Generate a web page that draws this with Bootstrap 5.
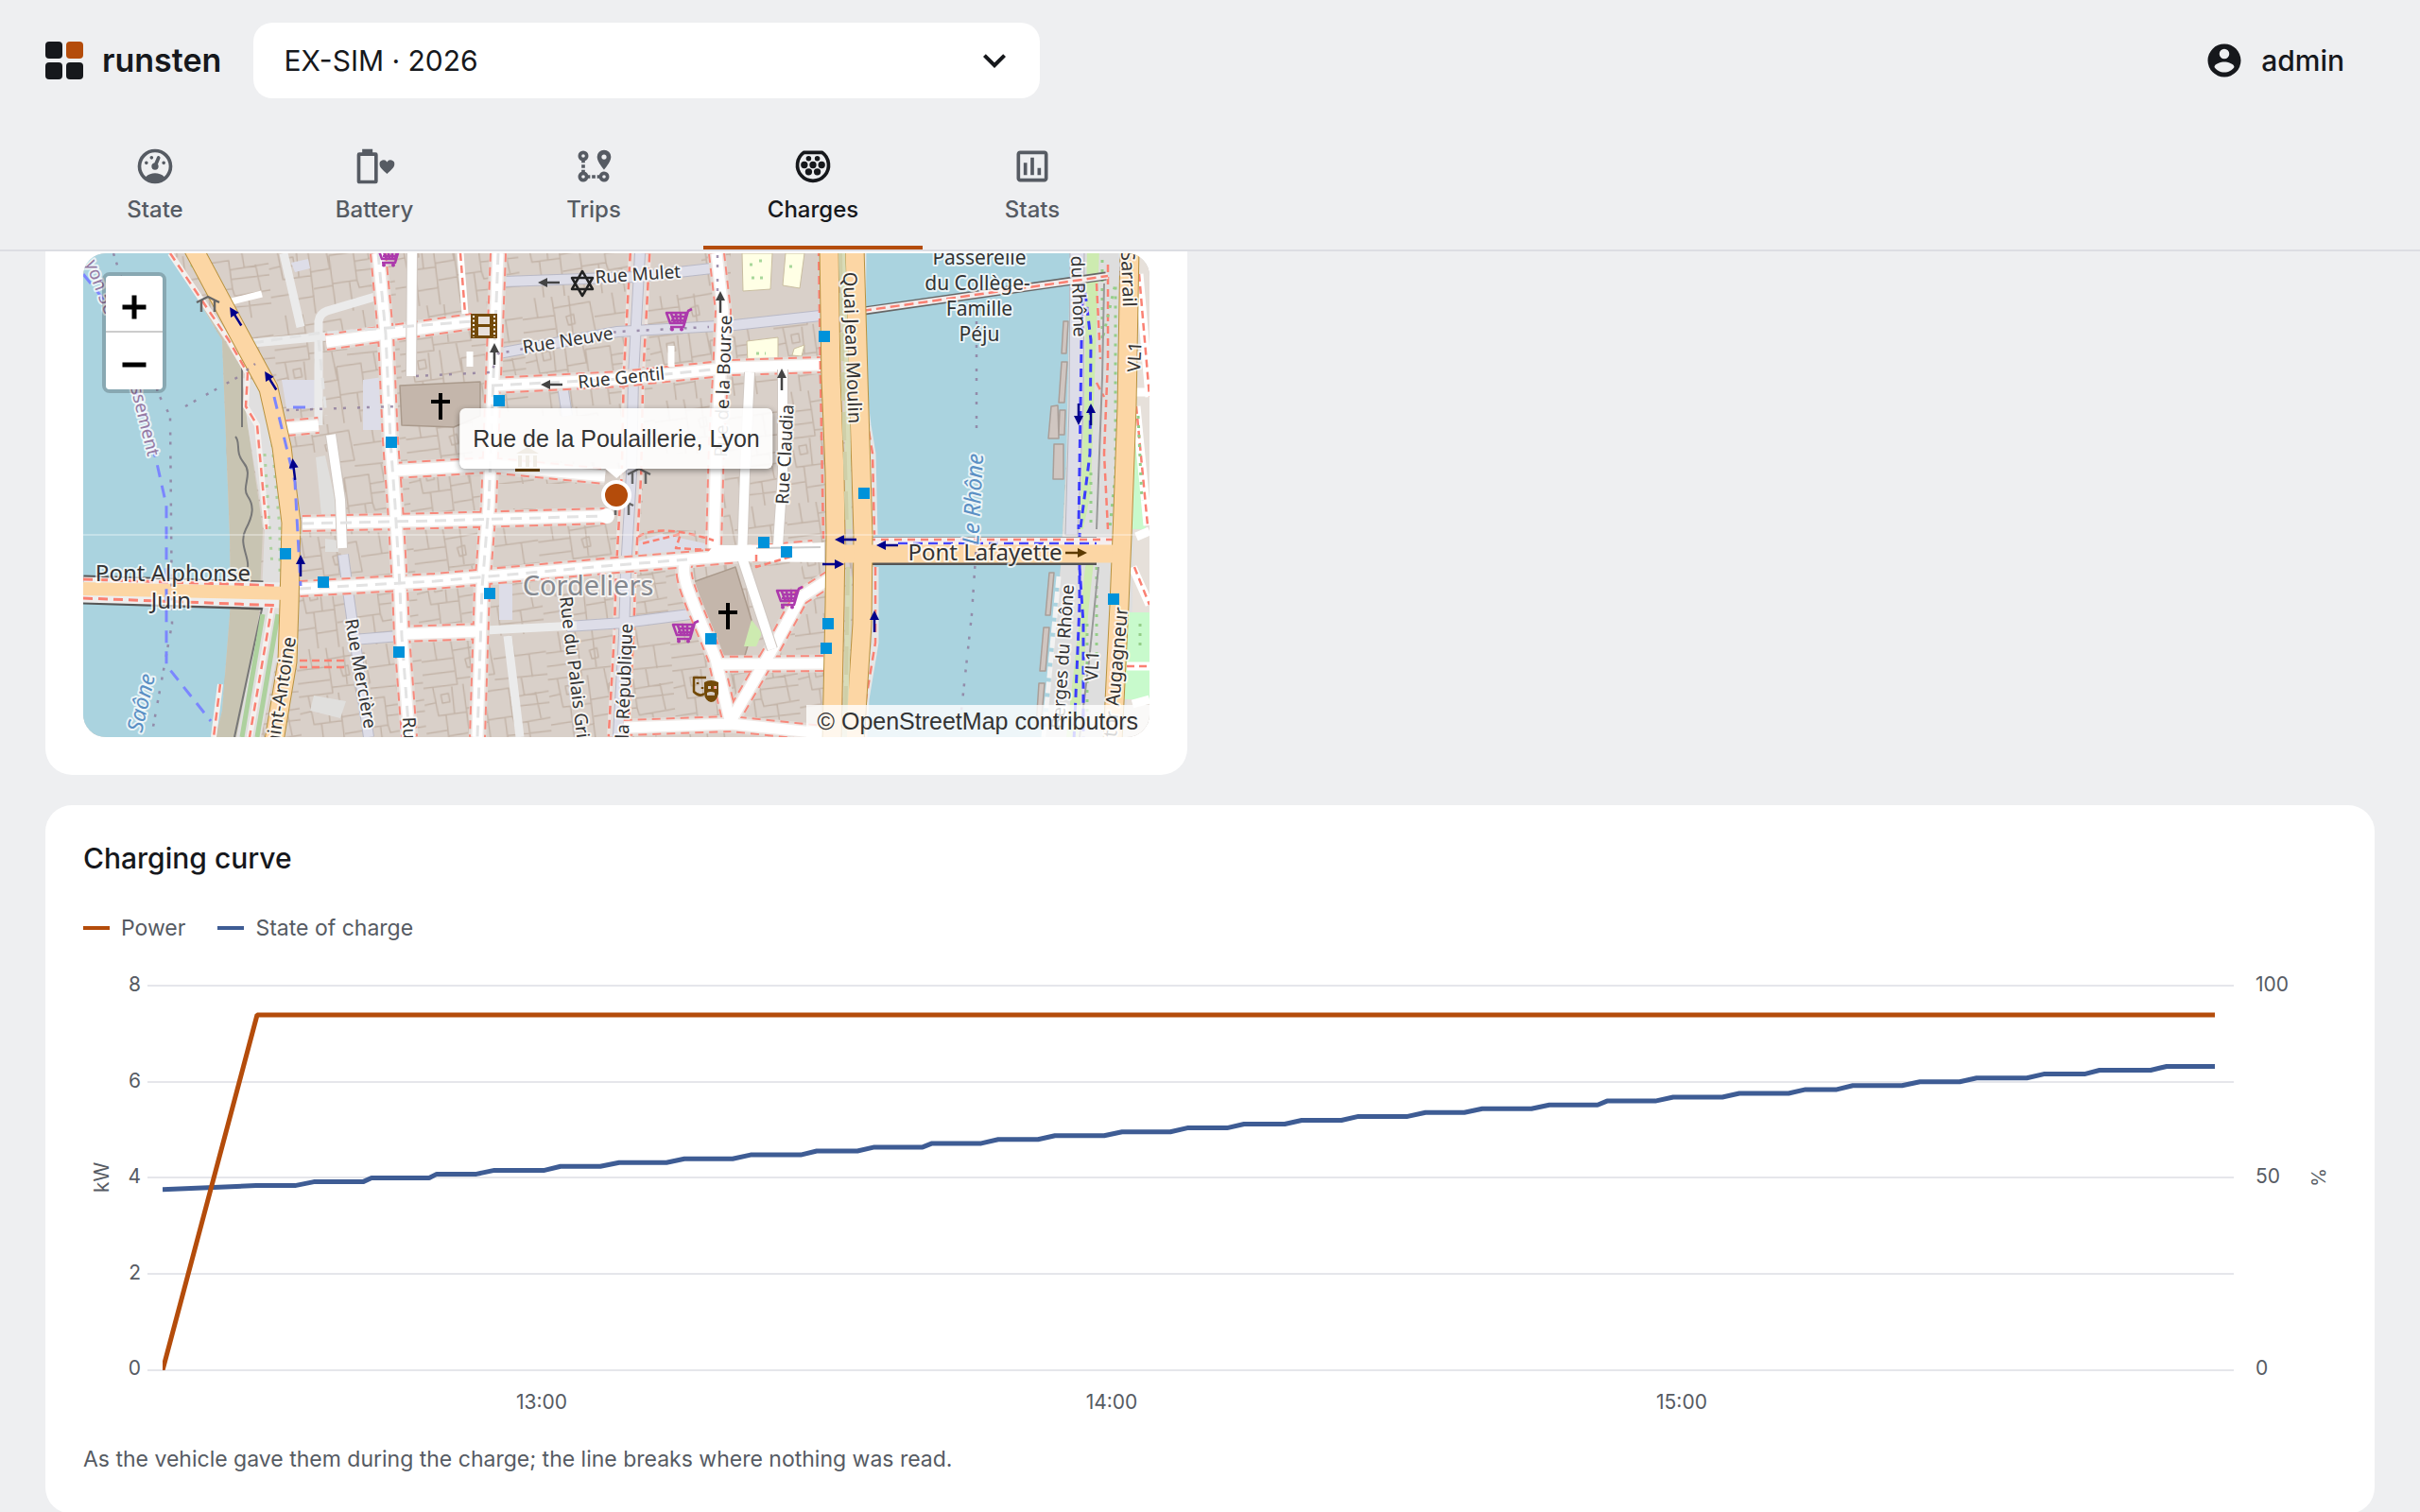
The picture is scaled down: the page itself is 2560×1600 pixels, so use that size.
<!doctype html>
<html lang="en">
<head>
<meta charset="utf-8">
<meta name="viewport" content="width=device-width, initial-scale=1">
<title>runsten · Charges</title>
<link href="https://cdn.jsdelivr.net/npm/bootstrap@5.3.0/dist/css/bootstrap.min.css" rel="stylesheet">
<script src="https://cdn.jsdelivr.net/npm/bootstrap@5.3.0/dist/js/bootstrap.bundle.min.js"></script>
<style>
:root{--ink:#16181c;--soft:#565b63;--accent:#b44c0b;--blue:#3e5c94;--page:#eeeff1;--line:#dcdde3}
body{background:var(--page);color:var(--ink);font-family:Inter,sans-serif;font-size:30px;line-height:40px}
.topbar{background:var(--page);border-bottom:2px solid var(--line);z-index:20}
.brand-row{padding:24px 80px 24px 48px}
.brand{font-size:34px;font-weight:600;color:var(--ink);text-decoration:none;gap:20px;padding-right:34px}
.vehicle{width:832px;height:80px;border:0;border-radius:20px;padding:0 80px 0 32px;font-size:30px;line-height:40px;color:var(--ink);background-color:#fff;
background-image:url("data:image/svg+xml,%3Csvg xmlns='http://www.w3.org/2000/svg' viewBox='0 0 24 24'%3E%3Cpath fill='%2316181c' d='M7.41 8.58 12 13.17l4.59-4.59L18 10l-6 6-6-6z'/%3E%3C/svg%3E");background-size:48px;background-position:right 24px center}
.account{background:none;border:0;padding:0;gap:18px;font-weight:500;color:var(--ink)}
.tabs{padding:0 48px}
.tab-link{width:232px;height:136px;padding-top:26px;gap:6px;border-bottom:4px solid transparent;color:var(--soft);font-size:24px;line-height:36px;font-weight:500;text-decoration:none}
.tab-link svg{width:44px;height:44px}
.tab-link.active{color:var(--ink);border-color:var(--accent)}
.content{padding:0 48px}
.panel{background:#fff;border-radius:28px;padding:36px 40px 40px}
.panel-map{width:1208px;padding-top:2px;border-top-left-radius:0;border-top-right-radius:0}
.map{height:512px;border-radius:24px;overflow:hidden;font-family:"Liberation Sans",sans-serif;color:#333}
.zoomer{left:20px;top:20px;border:4px solid rgba(0,0,0,.2);border-radius:8px;background-clip:padding-box}
.zoomer button{width:60px;height:60px;border:0;background:#fff;padding:8px 0 0}
.zoomer button:first-child{border-bottom:2px solid #ccc;border-radius:4px 4px 0 0}
.zoomer button:last-child{border-radius:0 0 4px 4px}
.place-tip{left:564px;top:164px;transform:translateX(-50%);height:64px;padding:0 14px;border-radius:6px;background:rgba(255,255,255,.9);box-shadow:0 2px 6px rgba(0,0,0,.4);font-size:25px;line-height:64px;white-space:nowrap}
.place-tip::after{content:"";position:absolute;left:50%;top:100%;margin-left:-12px;border:12px solid transparent;border-bottom:0;border-top:10px solid #fff}
.credit{right:0;bottom:0;background:rgba(255,255,255,.8);padding:0 12px;font-size:25px;line-height:34px}
.panel h2{font-size:30px;line-height:40px;font-weight:500;margin:0 0 36px}
.key{gap:34px;font-size:23px;line-height:36px;color:var(--soft);margin-bottom:14px}
.key span{gap:12px}
.key i{width:28px;height:4px}
.note{font-size:23px;line-height:36px;color:var(--soft);margin:20px 0 0}
.axis{font-size:21px;fill:var(--soft)}
.curve-chart{width:100%;height:auto}
.lbl{font-family:"Noto Sans",sans-serif;fill:#333;paint-order:stroke;stroke:rgba(255,255,255,.75);stroke-width:4px;stroke-linejoin:round;font-size:19px}
</style>
</head>
<body>
<header class="topbar sticky-top">
 <div class="brand-row d-flex align-items-center">
  <a href="#" class="brand d-flex align-items-center">
   <svg width="40" height="40" viewBox="0 0 40 40"><g fill="#16181c"><rect width="18" height="18" rx="4"/><rect y="22" width="18" height="18" rx="4"/><rect x="22" y="22" width="18" height="18" rx="4"/></g><rect x="22" width="18" height="18" rx="4" fill="#b44c0b"/></svg>
   runsten</a>
  <select class="form-select vehicle" aria-label="Vehicle"><option>EX-SIM · 2026</option></select>
  <button class="account d-flex align-items-center ms-auto"><svg width="42" height="42" viewBox="0 0 24 24" fill="currentColor"><path d="M12,19.2C9.5,19.2 7.29,17.92 6,16C6.03,14 10,12.9 12,12.9C14,12.9 17.97,14 18,16C16.71,17.92 14.5,19.2 12,19.2M12,5A3,3 0 0,1 15,8A3,3 0 0,1 12,11A3,3 0 0,1 9,8A3,3 0 0,1 12,5M12,2A10,10 0 0,0 2,12A10,10 0 0,0 12,22A10,10 0 0,0 22,12C22,6.47 17.5,2 12,2Z"/></svg>admin</button>
 </div>
 <nav class="tabs d-flex">
  <a href="#" class="tab-link d-flex flex-column align-items-center"><svg viewBox="0 0 24 24" fill="currentColor"><path d="M17.3,18C19,16.5 20,14.4 20,12A8,8 0 0,0 12,4A8,8 0 0,0 4,12C4,14.4 5,16.5 6.7,18C8.2,16.7 10,16 12,16C14,16 15.9,16.7 17.3,18M12,2A10,10 0 0,1 22,12A10,10 0 0,1 12,22A10,10 0 0,1 2,12A10,10 0 0,1 12,2M7,9A1,1 0 0,1 8,10A1,1 0 0,1 7,11A1,1 0 0,1 6,10A1,1 0 0,1 7,9M10,6A1,1 0 0,1 11,7A1,1 0 0,1 10,8A1,1 0 0,1 9,7A1,1 0 0,1 10,6M17,9A1,1 0 0,1 18,10A1,1 0 0,1 17,11A1,1 0 0,1 16,10A1,1 0 0,1 17,9M14.4,6.1C14.9,6.3 15.1,6.9 15,7.4L13.6,10.8C13.8,11.1 14,11.5 14,12A2,2 0 0,1 12,14A2,2 0 0,1 10,12C10,11 10.7,10.1 11.7,10L13.1,6.7C13.3,6.1 13.9,5.9 14.4,6.1Z"/></svg>State</a>
  <a href="#" class="tab-link d-flex flex-column align-items-center"><svg viewBox="0 0 24 24" fill="currentColor"><path d="M12,20H4V6H12M12.67,4H11V2H5V4H3.33A1.33,1.33 0 0,0 2,5.33V20.67C2,21.4 2.6,22 3.33,22H12.67A1.33,1.33 0 0,0 14,20.67V5.33A1.33,1.33 0 0,0 12.67,4"/><path d="M19.3,16.4L18.6,15.7C16.4,13.7 15,12.4 15,10.8A2.3,2.3 0 0 1 19.3,9.5A2.3,2.3 0 0 1 23.6,10.8C23.6,12.4 22.2,13.7 20,15.7Z"/></svg>Battery</a>
  <a href="#" class="tab-link d-flex flex-column align-items-center"><svg viewBox="0 0 24 24" fill="currentColor"><path d="M18,15A3,3 0 0,1 21,18A3,3 0 0,1 18,21C16.69,21 15.58,20.17 15.17,19H14V17H15.17C15.58,15.83 16.69,15 18,15M18,17A1,1 0 0,0 17,18A1,1 0 0,0 18,19A1,1 0 0,0 19,18A1,1 0 0,0 18,17M18,8A1.43,1.43 0 0,0 19.43,6.57C19.43,5.78 18.79,5.14 18,5.14C17.21,5.14 16.57,5.78 16.57,6.57A1.43,1.43 0 0,0 18,8M18,2.57A4,4 0 0,1 22,6.57C22,9.56 18,14 18,14C18,14 14,9.56 14,6.57A4,4 0 0,1 18,2.57M8.83,17H10V19H8.83C8.42,20.17 7.31,21 6,21A3,3 0 0,1 3,18C3,16.69 3.83,15.58 5,15.17V14H7V15.17C7.85,15.47 8.53,16.15 8.83,17M6,17A1,1 0 0,0 5,18A1,1 0 0,0 6,19A1,1 0 0,0 7,18A1,1 0 0,0 6,17M6,3A3,3 0 0,1 9,6C9,7.31 8.17,8.42 7,8.83V10H5V8.83C3.83,8.42 3,7.31 3,6A3,3 0 0,1 6,3M6,5A1,1 0 0,0 5,6A1,1 0 0,0 6,7A1,1 0 0,0 7,6A1,1 0 0,0 6,5M11,19V17H13V19H11M7,13H5V11H7V13Z"/></svg>Trips</a>
  <a href="#" class="tab-link active d-flex flex-column align-items-center" aria-current="page"><svg viewBox="0 0 24 24" fill="currentColor"><path d="M6.8 4H17.2A9 9 0 1 1 6.8 4Z" fill="none" stroke="currentColor" stroke-width="2" stroke-linejoin="round"/><circle cx="9.5" cy="7.5" r="1.5"/><circle cx="14.5" cy="7.5" r="1.5"/><circle cx="7" cy="11.2" r="2"/><circle cx="12" cy="11.2" r="2"/><circle cx="17" cy="11.2" r="2"/><circle cx="9.5" cy="15.2" r="2"/><circle cx="14.5" cy="15.2" r="2"/></svg>Charges</a>
  <a href="#" class="tab-link d-flex flex-column align-items-center"><svg viewBox="0 0 24 24" fill="currentColor"><path d="M9,17H7V10H9V17M13,17H11V7H13V17M17,17H15V13H17V17M19,19H5V5H19V19.1M19,3H5C3.9,3 3,3.9 3,5V19C3,20.1 3.9,21 5,21H19C20.1,21 21,20.1 21,19V5C21,3.9 20.1,3 19,3Z"/></svg>Stats</a>
 </nav>
</header>

<main class="content d-flex flex-column gap-4">
<section class="panel panel-map" aria-label="Location">
<div class="map position-relative">
<svg class="d-block w-100 h-100" viewBox="88 268 1128 512" preserveAspectRatio="xMidYMid slice" stroke-linejoin="round" aria-label="Map of Lyon">
<defs>
<pattern id="plots" width="132" height="118" patternUnits="userSpaceOnUse" patternTransform="rotate(-4)"><path d="M0 22L34 20 36 48 0 50M14 0L16 21M34 20L32 0M34 12L72 8 76 40 36 42M50 0L52 40M76 24L132 20M96 0L98 22M114 22L116 46M76 46L132 44M10 50L14 80 44 78 42 48M30 50L31 79M60 42L64 72 44 74M64 58L90 56 92 86 66 88 64 58M90 66L132 62M104 45L106 64M118 62L122 90M92 76L132 74M0 68L12 66M22 80L24 118M0 98L22 96M44 78L46 118M24 102L46 100M66 88L68 118M46 92L66 90M84 87L86 118M92 86L94 94 132 90M108 92L110 118M86 106L132 104M0 36L34 34M46 22L54 20 55 30 48 31ZM18 58L26 57 27 66 19 67Z" fill="none" stroke="#c3b4a8" stroke-width="1.5"/></pattern>
<g id="cart" fill="none" stroke="#ac39ac" stroke-width="2.6"><path d="M-13-7H8L5 4H-9ZM14-11L10-9 5 8H-9M-8-3H8M-8 1H7M-8-6L-4 4M-3-6L-1 4M2-6L2 4"/><path d="M-7 10.500v.1M3 10.500v.1" stroke-width="4" stroke-linecap="round"/></g>
<g id="arw"><path d="M0 10V-6" stroke="currentColor" stroke-width="2.500"/><path d="M0-13L5-3H-5Z" fill="currentColor"/></g>
<g id="shelter" fill="none" stroke="#666" stroke-width="2.500"><path d="M-12 -2L0-8 12-2M-7-4V8M7-4V8"/></g>
<path id="roads1" fill="none" d="M400 268L408 353L413 466L418 535L423 621L425 673L433 780M527 268L522 398L517 535L510 622L505 780M758 268L765 329L762 398L758 467L755 580M317 623L460 615L640 599L727 592L860 580M520 408L657 401L773 389L868 386M320 554L460 551L640 546M727 592C715 605 735 640 757 697L773 766M773 763L817 687L847 632L878 612M303 453L337 450M423 671L510 668M757 703L872 702M660 770L773 766L870 776M417 498L517 492L640 504M345 362L500 340"/>
<path id="lanes" fill="none" d="M793 394L788 501L785 590L817 687M350 460L360 529L362 580M436 268L435 398M828 391L828 501L823 577"/>
<path id="quays" fill="none" d="M204 262L252 352L284 411L298 473L308 553L306 640L304 700L290 784M877 262L879 400L883 500L884 567L883 640L880 784M904 262L908 400L911 500L913 567L912 660L904 784M1195 262L1192 430L1187 567L1184 640L1177 784"/>
</defs>
<rect x="88" y="268" width="1128" height="512" fill="#d9d0c9"/>
<rect x="88" y="268" width="1128" height="512" fill="url(#plots)"/>
<!-- courtyards without inner plots -->
<path d="M525 512H640V538H522ZM680 480H752V562L680 560ZM773 268H868V330L773 340ZM308 480L350 478 356 548H314ZM500 440H660V490L500 486ZM795 600L850 596 812 670ZM742 310L690 314V268H742Z" fill="#d9d0c9"/>
<path d="M334 484L344 482 358 545 340 545ZM344 570L358 572V584H344ZM332 736L366 742 360 760 328 752Z" fill="#e0dfdd"/>
<!-- Saône and its bank -->
<path d="M88 268H180L235 360 243 566 244 639 235 752 228 780H88Z" fill="#aad3df"/>
<path d="M200 300L235 360 243 566 244 639 235 752 228 780H252L274 650 278 560 262 450 256 390Z" fill="#c8c4b2"/>
<path d="M256 400L284 404 304 520V642L276 780H250L276 650 280 560 262 450Z" fill="#e0dfdf"/>
<path d="M256 385V452M249 462C255 468 248 478 258 490S255 515 262 525 268 545 260 560 264 590 262 600M278 640L248 780" fill="none" stroke="#777" stroke-width="2"/>
<path d="M278 650L256 780M294 650L272 780" stroke="#add19e" stroke-width="5" fill="none"/>
<path d="M288 640L264 780M180 268L242 360 262 395 260 430 272 450 282 560M233 724L226 780" stroke="#f4f0ee" stroke-width="6" fill="none"/>
<path d="M288 640L264 780M180 268L242 360 262 395 260 430 272 450 282 560M233 724L226 780" stroke="#fa8072" stroke-width="2.500" stroke-dasharray="9 6" fill="none"/>
<path d="M288 470L296 560V610M280 480L288 600M202 280L230 310 256 370" stroke="#add19e" stroke-width="3" stroke-dasharray="3 8" fill="none"/>
<!-- squares, churches, schools -->
<path d="M298 402H335V432H303ZM384 402L412 398V455H384ZM528 618H542V656H528ZM675 573L700 565 750 576 740 586 676 588ZM308 278L326 274 328 284 312 288Z" fill="#dddde8"/>
<path d="M423 408L508 404V440L480 452 425 450ZM733 616L778 600 797 663 787 697 760 696Z" fill="#c4b6ab" stroke="#aa9a8c" stroke-width="1.500"/>
<path d="M795 656L806 670 800 684 787 684Z" fill="#cdebb0"/>
<path d="M785 268H817L815 306 786 308ZM831 268H851L846 305 828 302ZM790 361L823 357V383L791 384ZM840 369L851 365 848 377 838 376Z" fill="#ffffe5" stroke="#c9bda0"/>
<path d="M793 280h6M803 276h6M795 294h12M835 282h8M800 374h10" stroke="#a8d79a" stroke-width="3" stroke-dasharray="3 6"/>
<!-- pedestrian streets -->
<g fill="none"><path d="M677 268L670 398L668 501L662 604L660 673L654 780" stroke="#ece4e0" stroke-width="24"/><path d="M677 268L670 398L668 501L662 604L660 673L654 780" stroke="#fa8072" stroke-width="23" stroke-dasharray="9 6"/><path d="M677 268L670 398L668 501L662 604L660 673L654 780" stroke="#e3dcda" stroke-width="18"/>
<path d="M677 268L670 398L668 501L662 604L660 673L654 780M533 298L673 293L753 284M527 374L653 351L777 344L868 334M363 587L370 639L390 780M373 677L423 673M600 663L660 659L730 650M595 408L600 440" stroke="#b9b9c6" stroke-width="12"/><path d="M677 268L670 398L668 501L662 604L660 673L654 780M533 298L673 293L753 284M527 374L653 351L777 344L868 334M363 587L370 639L390 780M373 677L423 673M600 663L660 659L730 650M595 408L600 440" stroke="#dddde8" stroke-width="10"/><path d="M513 667L610 662M537 673L550 780M300 268L318 346M267 363L345 356M337 450L337 340Q338 332 346 329L400 313" stroke="#ebebeb" stroke-width="9"/></g>
<!-- streets -->
<use href="#roads1" stroke="#e2dad5" stroke-width="19"/>
<use href="#roads1" stroke="#fa8072" stroke-opacity=".9" stroke-width="18" stroke-dasharray="9 6"/>
<use href="#roads1" stroke="#efe9e6" stroke-width="14"/>
<use href="#roads1" stroke="#fff" stroke-width="11"/>
<use href="#lanes" stroke="#d0c8c2" stroke-width="12"/><use href="#lanes" stroke="#fff" stroke-width="10"/>
<path d="M755 577L830 576 872 574V595L780 594 740 596Z" fill="#fff"/>
<path d="M800 580L868 579" stroke="#ccc" stroke-width="2"/>
<path d="M400 268L408 353L413 466L418 535L423 621L425 673L433 780M527 268L522 398L517 535L510 622L505 780M317 623L460 615L640 599L727 592M320 554L460 551L640 546M520 408L657 401L773 389M267 363L333 353L500 340M337 360L345 440" fill="none" stroke="#e3e3e3" stroke-width="3" stroke-dasharray="12 8"/>
<path d="M245 319L277 311M487 268L492 332M497 388V372M710 388V366" fill="none" stroke="#fff" stroke-width="7"/>
<path d="M317 699H368M317 706H368M487 268L492 332" stroke="#fa8072" stroke-width="2.500" stroke-dasharray="8 5" fill="none"/>
<circle cx="642" cy="546" r="8" fill="#fff"/>
<path d="M675 568C690 558 720 560 755 572M680 575L720 565 715 580 750 582M800 587V600L840 588" fill="none" stroke="#fa8072" stroke-width="2.500" stroke-dasharray="7 4"/>
<!-- Rhône and east bank -->
<path d="M916 262L914 330 918 450 926 480 925 570 928 690 918 740 915 784H1110L1122 600 1130 450 1135 262Z" fill="#aad3df"/>
<path d="M1132 262H1216V784H1106L1122 600 1128 500Z" fill="#dedede"/>
<path d="M1132 262H1147L1146 430 1140 566H1127L1131 430Z" fill="#dddde8" stroke="#b5b5bd"/>
<path d="M1150 262H1163L1158 400 1154 520 1146 560H1142L1147 430ZM1148 600L1159 576 1152 640 1147 700 1140 780H1128Z" fill="#cdebb0"/>
<path d="M1204 262H1216V784H1190L1198 640Z" fill="#e6e0da"/>
<path d="M1202 430L1208 500 1212 560H1198ZM1193 648H1216V740H1187Z" fill="#c8facc"/>
<path d="M1192 705H1216M1205 290L1216 420M1202 430L1214 556M1198 600L1216 640M1200 415H1216M1202 568L1216 562M1198 745L1216 740" fill="none" stroke="#fff" stroke-width="9"/>
<path d="M1192 705H1216M1205 290L1216 420M1202 430L1214 556M1172 280V380L1168 480 1172 560M1160 300L1164 380M1160 405L1168 420M1200 600L1216 640" fill="none" stroke="#fa8072" stroke-width="2.500" stroke-dasharray="8 5"/>
<path d="M1166 275V360L1180 300V500L1174 560M1154 500V560M1150 660V770M1160 600V700M1204 440L1208 530M1206 660V690" fill="none" stroke="#94ce88" stroke-width="3" stroke-dasharray="3 7"/>
<path d="M1168 300L1166 400 1160 560M1162 600L1152 700 1142 780" fill="none" stroke="#999" stroke-width="2"/>
<g fill="#d0c6c1" stroke="#a99e98" stroke-width="1.500"><path d="M1125 340h5l-2 34h-5ZM1123 383h6l-3 43h-6ZM1112 430l7-1 1 35h-11ZM1121 434h6l-1 26h-6ZM1115 470h10v37h-11ZM1110 606h5l-4 45h-5ZM1104 664h6l-4 46h-6ZM1099 723h6l-4 46h-5Z"/></g>
<path d="M1120 610L1104 780" stroke="#f2f2f2" stroke-width="5" stroke-dasharray="12 4"/>
<path d="M1148 310L1154 360 1153 480 1148 520 1142 566 1142 640 1136 784M1145 300L1141 560M1142 600L1146 660 1146 784" fill="none" stroke="#3c3cff" stroke-width="3" stroke-dasharray="9 6"/>
<!-- passerelle -->
<path d="M914 329L1170 292" stroke="#666" stroke-width="9"/><path d="M912 329L1172 292" stroke="#f3eeee" stroke-width="6"/><path d="M912 329L1172 292" stroke="#fa8072" stroke-width="2.500" stroke-dasharray="10 5"/>
<path d="M913 262L912 400 918 450 923 480 925 566M926 600V680L916 740 914 780" fill="none" stroke="#e6e6e6" stroke-width="7"/>
<path d="M913 262L912 400 918 450 923 480 925 566M926 600V680L916 740 914 780M866 262L868 400 871 570" fill="none" stroke="#fa8072" stroke-width="2.500" stroke-dasharray="9 6"/>
<!-- main roads -->
<path d="M920 583H1160" stroke="#555" stroke-width="30"/>
<path d="M918 573H1180" stroke="#f5eeee" stroke-width="9"/>
<path d="M918 571H1180" stroke="#fa8072" stroke-width="2.500" stroke-dasharray="8 6"/><path d="M950 575H1160" stroke="#4646ff" stroke-width="2.500" stroke-dasharray="10 6"/>
<path d="M88 624L278 630" stroke="#555" stroke-width="31"/><path d="M88 624L300 630" stroke="#eee" stroke-width="27"/>
<path d="M88 613L300 620M88 633L300 641" stroke="#fa8072" stroke-width="3" stroke-dasharray="10 6"/>
<use href="#quays" stroke="#b8923f" stroke-width="21"/>
<path d="M891 262L896 420 898 560M898 610L894 784" fill="none" stroke="#d8dcb8" stroke-width="6"/>
<path d="M88 623L306 628" stroke="#fcd6a4" stroke-width="14"/>
<path d="M876 586H1190" stroke="#fcd6a4" stroke-width="19"/>
<use href="#quays" stroke="#fcd6a4" stroke-width="19"/>
<path d="M889 268L892 420 896 560M897 600L894 780" fill="none" stroke="#cfcfa8" stroke-width="4" stroke-dasharray="30 12"/>
<!-- administrative lines -->
<g fill="none" stroke="#8c7a9c" stroke-opacity=".8" stroke-width="2.500" stroke-dasharray="3 7 3 12"><path d="M120 268L168 418 180 440 182 660 160 780M196 430L250 400 270 385M1033 340V460M1033 574L1028 650 1015 770M303 434L420 430M440 398L520 394 527 374 653 351 750 346M759 270V320"/></g>
<g fill="none" stroke="#7b86ff" stroke-width="3" stroke-dasharray="13 9"><path d="M88 290L120 330 165 486 176 535V704L223 763M310 431H332M290 420L312 510 318 620"/></g>
<!-- one-way arrows -->
<g color="#00008b"><use href="#arw" transform="translate(250 336) rotate(-32)"/><use href="#arw" transform="translate(287 404) rotate(-32)"/><use href="#arw" transform="translate(311 498) rotate(-7)"/><use href="#arw" transform="translate(318 600)"/><use href="#arw" transform="translate(896 571) rotate(-90)"/><use href="#arw" transform="translate(940 577) rotate(-90)"/><use href="#arw" transform="translate(880 597) rotate(90)"/><use href="#arw" transform="translate(925 659)"/><use href="#arw" transform="translate(1141 437) rotate(180)"/><use href="#arw" transform="translate(1154 440)"/></g>
<g color="#5c3a00"><use href="#arw" transform="translate(1137 585) rotate(90)"/></g>
<g color="#444"><use href="#arw" transform="translate(582 299) rotate(-90)"/><use href="#arw" transform="translate(585 407) rotate(-90)"/><use href="#arw" transform="translate(523 376)"/><use href="#arw" transform="translate(762 321)"/><use href="#arw" transform="translate(827 403)"/></g>
<!-- points of interest -->
<g fill="#0092da"><path d="M408 462h12v12h-12ZM296 580h12v12h-12ZM336 610h12v12h-12ZM416 684h12v12h-12ZM522 418h12v12h-12ZM512 622h12v12h-12ZM802 568h12v12h-12ZM826 578h12v12h-12ZM746 670h12v12h-12ZM866 350h12v12h-12ZM908 516h12v12h-12ZM870 654h12v12h-12ZM868 680h12v12h-12ZM1172 628h12v12h-12Z"/></g>
<use href="#cart" x="718" y="338"/><use href="#cart" x="835" y="632"/><use href="#cart" x="725" y="668"/><use href="#cart" x="413" y="270"/>
<use href="#shelter" x="220" y="322"/><use href="#shelter" x="676" y="504"/><use href="#shelter" x="658" y="537"/>
<path d="M466 416V444M456 425H476M770 638V666M760 648H780" stroke="#000" stroke-width="4"/>
<path d="M616 287L627 306H605ZM616 313L605 294H627Z" fill="none" stroke="#222" stroke-width="2.500"/>
<path d="M498 332h28v26h-28Z" fill="#734a08"/><path d="M506 335h12v8h-12ZM506 346h12v9h-12Z" fill="#e8e0da"/><path d="M501 334V357M523 334V357" stroke="#fff" stroke-width="2" stroke-dasharray="2 2.500"/>
<path d="M545 499v-4h26v4ZM548 494v-12h4v12ZM556 494v-12h4v12ZM564 494v-12h4v12ZM546 480l12-7 12 7Z" fill="#734a08"/>
<path d="M747 717H734V732Q740 738 745 734M738 722v2M743 727v2" fill="none" stroke="#734a08" stroke-width="2.500"/><path d="M745 722Q752 718 760 722V734Q758 743 752 743 746 742 745 734ZM749 726v3h3v-3ZM755 726v3h3v-3ZM748 733q4-2 8 0v3h-8Z" fill="#734a08" fill-rule="evenodd"/>
<!-- names -->
<g class="lbl">
<g text-anchor="middle" style="font-size:24px"><text x="183" y="615">Pont Alphonse</text><text x="181" y="644">Juin</text><text x="1042" y="593">Pont Lafayette</text></g>
<g text-anchor="middle" style="font-size:21px"><text x="1036" y="280">Passerelle</text><text x="1034" y="307">du Collège-</text><text x="1036" y="334">Famille</text><text x="1036" y="361">Péju</text></g>
<text x="622" y="630" text-anchor="middle" style="font-size:29px;fill:#84888f">Cordeliers</text>
<text transform="translate(630 300) rotate(-4)">Rue Mulet</text>
<text transform="translate(554 374) rotate(-9)">Rue Neuve</text>
<text transform="translate(612 411) rotate(-6)">Rue Gentil</text>
<text transform="translate(769 484) rotate(-88)">Rue de la Bourse</text>
<text transform="translate(834 534) rotate(-87)">Rue Claudia</text>
<text transform="translate(892 288) rotate(88)" style="font-size:20px">Quai Jean Moulin</text>
<text transform="translate(1133 271) rotate(88)">du Rhône</text>
<text transform="translate(1188 325) rotate(88)" text-anchor="end" style="font-size:20px">Quai Sarrail</text>
<text transform="translate(1206 394) rotate(-87)">VL1</text><text transform="translate(1161 721) rotate(-87)">VL1</text>
<text transform="translate(1035 577) rotate(-87)" style="font-size:24px;font-style:italic;fill:#5a8fc4">Le Rhône</text>
<text transform="translate(1136 619) rotate(-86)" text-anchor="end">Berges du Rhône</text>
<text transform="translate(1193 643) rotate(-85)" text-anchor="end" style="font-size:20px">Victor Augagneur</text>
<text transform="translate(90 278) rotate(69)" style="fill:#957aa3">yon 5e</text>
<text transform="translate(138 410) rotate(76)" style="fill:#957aa3">ssement</text>
<text transform="translate(150 776) rotate(-77)" style="font-size:23px;font-style:italic;fill:#5a8fc4">Saône</text>
<text transform="translate(313 675) rotate(-81)" text-anchor="end" style="font-size:20px">Quai Saint-Antoine</text>
<text transform="translate(365 656) rotate(80)">Rue Mercière</text>
<text transform="translate(426 759) rotate(88)">Rue</text>
<text transform="translate(592 632) rotate(83)">Rue du Palais Grillet</text>
<text transform="translate(669 660) rotate(-88)" text-anchor="end">de la République</text>
</g>
<path d="M88 566H1216" stroke="#fff" stroke-opacity=".65"/>
<circle cx="652" cy="524" r="14" fill="#b44c0b" stroke="#fff" stroke-width="4"/>
</svg>
<div class="zoomer position-absolute d-flex flex-column">
<button aria-label="Zoom in"><svg class="d-block mx-auto" width="26" height="26" viewBox="0 0 26 26"><path d="M13 .5V25.500M.5 13H25.500" stroke="#000" stroke-width="5"/></svg></button>
<button aria-label="Zoom out"><svg class="d-block mx-auto" width="26" height="26" viewBox="0 0 26 26"><path d="M.5 13H25.500" stroke="#000" stroke-width="5"/></svg></button>
</div>
<div class="place-tip position-absolute">Rue de la Poulaillerie, Lyon</div>
<div class="credit position-absolute">© OpenStreetMap contributors</div>
</div>
</section>

<section class="panel mt-2">
<h2>Charging curve</h2>
<div class="key d-flex">
<span class="d-flex align-items-center"><i style="background:#b44c0b"></i>Power</span>
<span class="d-flex align-items-center"><i style="background:#3e5c94"></i>State of charge</span>
</div>
<svg class="curve-chart d-block" viewBox="88 1014 2384 492" role="img" aria-label="Power and state of charge over time">
<g stroke="#e5e6eb" stroke-width="2"><path d="M156 1043H2363M156 1145H2363M156 1246H2363M156 1348H2363M156 1450H2363"/></g>
<clipPath id="plot"><path d="M172 1030H2343V1450H172Z"/></clipPath>
<g fill="none" stroke-width="5" stroke-linejoin="bevel" clip-path="url(#plot)">
<path id="soc" stroke="#3e5c94"/>
<path stroke="#b44c0b" d="M172 1450L272 1074H2343"/>
</g>
<g class="axis" text-anchor="end"><text x="149" y="1049">8</text><text x="149" y="1151">6</text><text x="149" y="1252">4</text><text x="149" y="1354">2</text><text x="149" y="1455">0</text></g>
<g class="axis"><text x="2386" y="1049">100</text><text x="2386" y="1252">50</text><text x="2386" y="1455">0</text></g>
<g class="axis" text-anchor="middle"><text x="573" y="1491">13:00</text><text x="1176" y="1491">14:00</text><text x="1779" y="1491">15:00</text><text transform="translate(115 1246) rotate(-90)">kW</text><text transform="translate(2460 1246) rotate(-90)" style="font-size:20px">%</text></g>
</svg>
<p class="note">As the vehicle gave them during the charge; the line breaks where nothing was read.</p>
</section>
</main>
<script>
// each pair is the start and the end of a one-percent rise, from 48 % up
const rises=[[312,332],[384,393],[454,462],[504,523],[576,593],[635,655],[705,724],[775,794],[847,864],[907,925],[976,986],[1038,1056],[1098,1116],[1168,1187],[1238,1256],[1298,1316],[1359,1377],[1419,1437],[1489,1508],[1549,1568],[1620,1639],[1690,1700],[1751,1770],[1822,1840],[1892,1910],[1943,1960],[2012,2031],[2073,2091],[2144,2162],[2205,2221],[2275,2292]];
const y=p=>(1450-p*4.07).toFixed(1);
let d=`M172 ${y(47)}L271 ${y(48)}`;
rises.forEach(([a,b],i)=>{d+=`L${a} ${y(48+i)}L${b} ${y(49+i)}`});
document.getElementById('soc').setAttribute('d',d+'H2343');
</script>
</body>
</html>
